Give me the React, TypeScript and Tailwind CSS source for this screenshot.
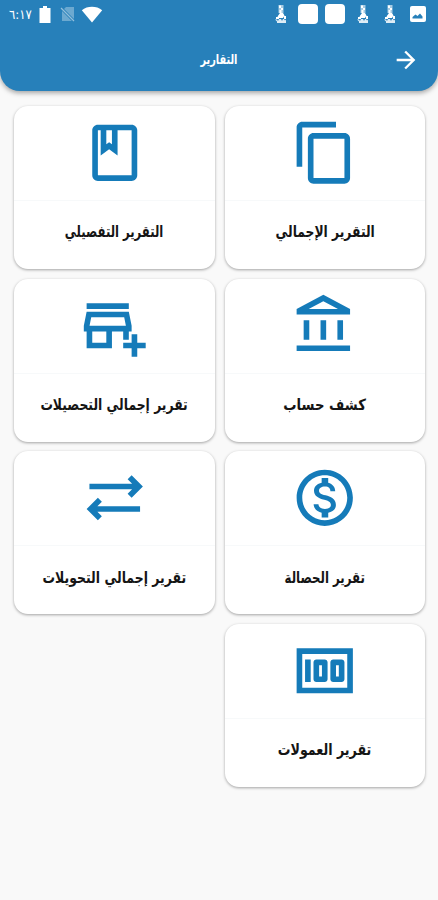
import type { ReactNode } from "react";

type Report = { label: string; icon: string; text: string };

const reports: Report[] = [
  {
    label: "التقرير الإجمالي",
    text: "scale-x-[0.883]",
    icon: "M16 1H4c-1.1 0-2 .9-2 2v14h2V3h12V1zm3 4H8c-1.1 0-2 .9-2 2v14c0 1.1.9 2 2 2h11c1.1 0 2-.9 2-2V7c0-1.1-.9-2-2-2zm0 16H8V7h11v14z",
  },
  {
    label: "التقرير التفصيلي",
    text: "scale-x-[0.833]",
    icon: "M18 2H6c-1.1 0-2 .9-2 2v16c0 1.1.9 2 2 2h12c1.1 0 2-.9 2-2V4c0-1.1-.9-2-2-2zM9 4h2v5l-1-.75L9 9V4zm9 16H6V4h1v9l3-2.25L13 13V4h5v16z",
  },
  {
    label: "كشف حساب",
    text: "scale-x-[0.947]",
    icon: "M6.5 10h-2v7h2v-7zm6 0h-2v7h2v-7zm8.5 9H2v2h19v-2zm-2.5-9h-2v7h2v-7zm-7-6.74L16.71 6H6.29l5.21-2.74m0-2.26L2 6v2h19V6l-9.5-5z",
  },
  {
    label: "تقرير إجمالي التحصيلات",
    text: "scale-x-[0.887]",
    icon: "M15 17h2v-3h1v-2l-1-5H2l-1 5v2h1v6h9v-6h4v3zm-6 1H4v-4h5v4zm-5.96-6l.6-3h11.72l.6 3H3.04zM2 4h15v2H2zM20 18v-3h-2v3h-3v2h3v3h2v-3h3v-2h-3z",
  },
  {
    label: "تقرير الحصالة",
    text: "scale-x-[0.841]",
    icon: "M12 2C6.48 2 2 6.48 2 12s4.48 10 10 10 10-4.48 10-10S17.52 2 12 2zm0 18c-4.41 0-8-3.59-8-8s3.59-8 8-8 8 3.59 8 8-3.59 8-8 8zm.31-8.86c-1.77-.45-2.34-.94-2.34-1.67 0-.84.79-1.43 2.1-1.43 1.38 0 1.9.66 1.94 1.64h1.71c-.05-1.34-.87-2.57-2.49-2.97V5H10.9v1.69c-1.51.32-2.72 1.3-2.72 2.81 0 1.79 1.49 2.69 3.66 3.21 1.95.46 2.34 1.15 2.34 1.87 0 .53-.39 1.39-2.1 1.39-1.6 0-2.23-.72-2.32-1.64H8.04c.1 1.7 1.36 2.66 2.86 2.97V19h2.34v-1.67c1.52-.29 2.72-1.16 2.73-2.77-.01-2.2-1.9-2.96-3.66-3.42z",
  },
  {
    label: "تقرير إجمالي التحويلات",
    text: "scale-x-[0.893]",
    icon: "M22 8l-4-4-1.41 1.41L18.17 7H3v2h15.17l-1.59 1.59L18 12l4-4zM2 16l4 4 1.41-1.41L5.83 17H21v-2H5.83l1.59-1.59L6 12l-4 4z",
  },
  {
    label: "تقرير العمولات",
    text: "scale-x-[0.906]",
    icon: "M15 16h3c.55 0 1-.45 1-1V9c0-.55-.45-1-1-1h-3c-.55 0-1 .45-1 1v6c0 .55.45 1 1 1zm1-6h1v4h-1v-4zM9 16h3c.55 0 1-.45 1-1V9c0-.55-.45-1-1-1H9c-.55 0-1 .45-1 1v6c0 .55.45 1 1 1zm1-6h1v4h-1v-4zM5 8h2v8H5zM2 4v16h20V4H2zm18 14H4V6h16v12z",
  },
];

function Glyph({ className, children }: { className: string; children: ReactNode }) {
  return (
    <svg viewBox="0 0 24 24" fill="currentColor" className={className}>
      {children}
    </svg>
  );
}

function AppNotification() {
  return (
    <svg viewBox="0 0 14 20" className="h-5 w-[14px]" fill="white">
      <path d="M4.500 1h5v8h-5z" opacity=".6" />
      <path d="M5 1.500h2v2.500H5zM7 4h2v2H7zM5.500 6h2v3h-2z" />
      <path d="M6 9h3l1.500 2.500L9 14H5l-1.500-1.500zM2 13h3v2H2zM10 12h2v3h-2z" />
      <path d="M1 15.500h2l1 1.500 1-2h2l1 2 1-2h1l1 1.500 1-1V19H3v-1.500z" opacity=".85" />
    </svg>
  );
}

function StatusBar() {
  return (
    <div dir="ltr" className="flex h-7 items-center text-white">
      <span className="ml-[9px] w-[24px] text-[13px] leading-none font-normal">٦:١٧</span>
      <svg viewBox="0 0 12 17" className="ml-[6px] h-[17px] w-3" fill="white">
        <path d="M4 0h4v2h3.500v15H.5V2H4z" />
      </svg>
      <svg viewBox="0 0 15 16" className="ml-[9px] h-4 w-[15px]">
        <path d="M6 1h8v14H2V5z" fill="white" opacity=".32" />
        <path d="M1 2l13 13" stroke="#2780ba" strokeWidth="3" />
        <path d="M1 2l13 13" stroke="white" strokeWidth="1.300" opacity=".5" />
      </svg>
      <svg viewBox="0 0 22 17" className="ml-[6px] h-[17px] w-[22px]" fill="white">
        <path d="M11 16.500L.8 4.300C6.500-.3 15.500-.3 21.200 4.300z" />
      </svg>
      <div className="mr-[12px] ml-auto flex items-center">
        <AppNotification />
        <span className="ml-[10px] size-5 rounded-[4px] bg-white" />
        <span className="ml-[7px] size-5 rounded-[4px] bg-white" />
        <span className="ml-[11px] flex">
          <AppNotification />
        </span>
        <span className="ml-[13px] flex">
          <AppNotification />
        </span>
        <svg viewBox="0 0 16 16" className="ml-[13px] size-4">
          <rect width="16" height="16" rx="2" fill="white" />
          <path d="M2.500 12.500V11l3-2.500 2 1.500L10 7.500l2.500 3v2z" fill="#2780ba" />
        </svg>
      </div>
    </div>
  );
}

function ReportCard({ label, icon, text }: Report) {
  return (
    <button className="flex h-[163px] flex-col items-center rounded-[14px] bg-white shadow-[0_1px_3px_rgba(0,0,0,0.35)]">
      <span className="flex h-[95px] w-full justify-center border-b border-[#f7f9fa] pt-[13px]">
        <Glyph className="size-[67.500px] text-[#157bb9]">
          <path d={icon} />
        </Glyph>
      </span>
      <span className={"flex h-[64px] items-center text-[15.500px] whitespace-nowrap text-[#151515] " + text}>
        {label}
      </span>
    </button>
  );
}

export default function App() {
  return (
    <div
      dir="rtl"
      className="min-h-screen bg-[#f9f9f9] font-['DejaVu_Sans_Condensed','DejaVu_Sans',sans-serif] font-bold"
    >
      <header className="h-[91px] rounded-b-[20px] bg-[#2780ba] shadow-[0_2px_5px_rgba(0,0,0,0.35)]">
        <StatusBar />
        <div className="grid h-[63px] grid-cols-[64px_1fr_64px] items-center text-white">
          <Glyph className="mr-[18px] size-[28px]">
            <path d="M12 4l-1.410 1.410L16.170 11H4v2h12.170l-5.580 5.590L12 20l8-8z" />
          </Glyph>
          <h1 className="scale-x-[0.8] text-center text-[13.500px] leading-none">التقارير</h1>
        </div>
      </header>
      <main className="grid grid-cols-2 gap-x-[10px] gap-y-[9.700px] pt-[15px] pr-[13px] pl-[14px]">
        {reports.map((report) => (
          <ReportCard key={report.label} {...report} />
        ))}
      </main>
    </div>
  );
}
